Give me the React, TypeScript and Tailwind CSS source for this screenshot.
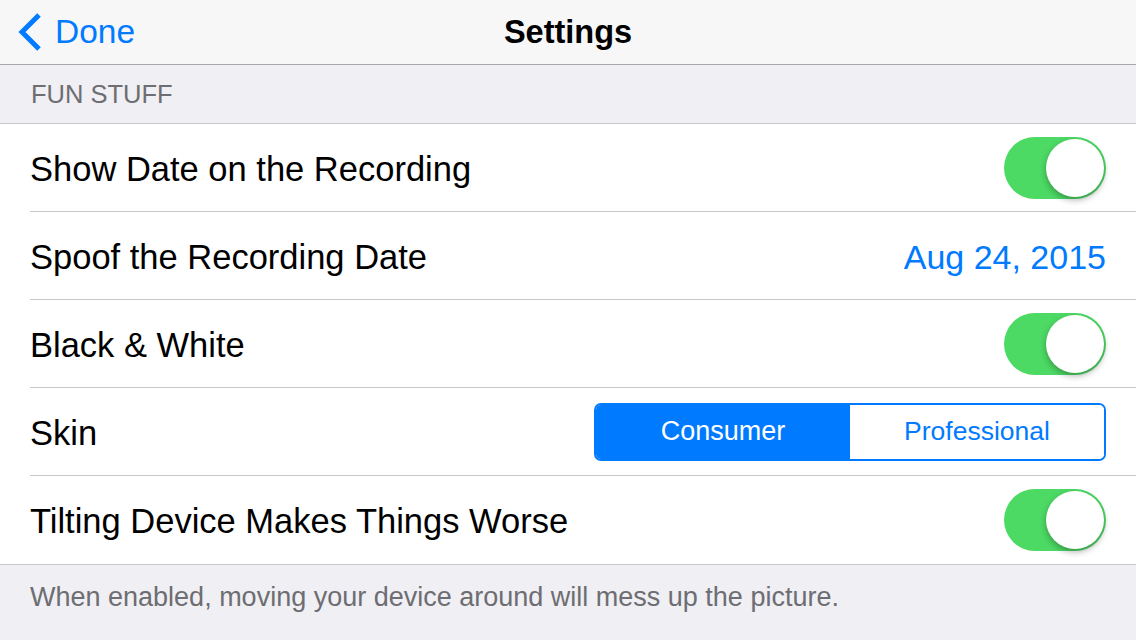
import React from "react";

function Toggle() {
  return (
    <div className="relative w-[102px] h-[62px] rounded-full bg-[#4cd964]">
      <div className="absolute right-[2px] top-[2px] w-[58px] h-[58px] rounded-full bg-white shadow-[0_3px_6px_rgba(0,0,0,0.3)]" />
    </div>
  );
}

function Row({ label, children, last }: { label: string; children?: React.ReactNode; last?: boolean }) {
  return (
    <div className="pl-[30px] bg-white">
      <div className={`h-[88px] flex items-center justify-between pr-[30px] ${last ? "" : "border-b border-[#c8c7cc]"}`}>
        <span className="text-[34.5px] leading-none pt-[3px] text-black">{label}</span>
        {children}
      </div>
    </div>
  );
}

export default function App() {
  return (
    <div className="w-[1136px] h-[640px] bg-[#efeff4] overflow-hidden" style={{ fontFamily: '"Liberation Sans", Arial, sans-serif' }}>
      <div className="h-[65px] bg-[#f7f7f8] border-b border-[#a7a7aa] relative flex items-center justify-center">
        <div className="absolute left-[17px] top-0 h-[64px] flex items-center gap-[12px] text-[#007aff]">
          <svg width="26" height="40" viewBox="0 0 26 40">
            <path d="M22 3 L5 20 L22 37" fill="none" stroke="#007aff" strokeWidth="5" />
          </svg>
          <span className="text-[33.5px] leading-none">Done</span>
        </div>
        <span className="text-[32.5px] leading-none font-bold text-black">Settings</span>
      </div>
      <div className="h-[59px] flex items-center pl-[31px] border-b border-[#c8c7cc]">
        <span className="text-[25.5px] leading-none pt-[2px] text-[#6d6d72]">FUN STUFF</span>
      </div>
      <Row label="Show Date on the Recording">
        <Toggle />
      </Row>
      <Row label="Spoof the Recording Date">
        <span className="text-[34px] leading-none pt-[3px] text-[#007aff]">Aug 24, 2015</span>
      </Row>
      <Row label="Black & White">
        <Toggle />
      </Row>
      <Row label="Skin">
        <div className="flex w-[512px] h-[58px] border-2 border-[#007aff] rounded-[7px] overflow-hidden">
          <div className="flex-1 bg-[#007aff] text-white flex items-center justify-center text-[27px]">Consumer</div>
          <div className="flex-1 bg-white text-[#007aff] flex items-center justify-center text-[26.5px]">Professional</div>
        </div>
      </Row>
      <div className="border-b border-[#c8c7cc]">
        <Row label="Tilting Device Makes Things Worse" last>
          <Toggle />
        </Row>
      </div>
      <div className="pl-[30px] pt-[19px]">
        <span className="text-[27px] leading-none text-[#6d6d72]">When enabled, moving your device around will mess up the picture.</span>
      </div>
    </div>
  );
}
